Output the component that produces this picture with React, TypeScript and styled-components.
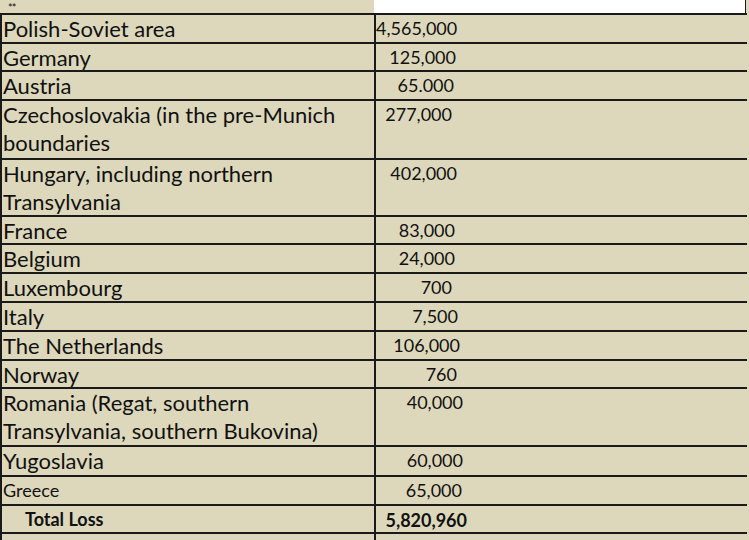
import React from "react";
import styled, { createGlobalStyle } from "styled-components";

const Global = createGlobalStyle`
  html, body { margin: 0; padding: 0; background: #ddd8bb; }
  body { font-family: Lato, "Liberation Sans", sans-serif; color: #111; }
`;

const BEIGE = "#ddd8bb";
const LINE = "#1a1a1a";

const Table = styled.div`
  width: 749px;
  background: ${BEIGE};
  overflow: hidden;
  height: 540px;
`;

const HeaderRow = styled.div`
  display: grid;
  grid-template-columns: 374px 372px 3px;
  height: 13px;
`;

const Stars = styled.div`
  font-size: 11px;
  line-height: 11px;
  padding-top: 2px;
  padding-left: 8px;
  letter-spacing: -1px;
`;

const WhiteCell = styled.div`
  background: #fff;
  border-right: 1px solid ${LINE};
`;

const Row = styled.div<{ $h: number }>`
  display: grid;
  grid-template-columns: 376px 1fr;
  height: ${(p) => p.$h}px;
  box-sizing: border-box;
  border-top: 2px solid ${LINE};
  margin-right: 2px;
`;

const Label = styled.div<{ $kind: "normal" | "small" | "total" }>`
  box-sizing: border-box;
  border-left: 2px solid ${LINE};
  border-right: 2px solid ${LINE};
  padding-left: ${(p) => (p.$kind === "total" ? 23 : 1)}px;
  padding-top: ${(p) => (p.$kind === "normal" ? 0 : 2)}px;
  font-size: ${(p) => (p.$kind === "normal" ? 22 : 18)}px;
  font-weight: ${(p) => (p.$kind === "total" ? 700 : 400)};
  line-height: ${(p) => (p.$kind === "normal" ? 28 : 22)}px;
  white-space: nowrap;
  overflow: hidden;
`;

const Value = styled.div<{ $end: number; $bold?: boolean }>`
  width: ${(p) => p.$end}px;
  text-align: right;
  font-size: 18px;
  font-weight: ${(p) => (p.$bold ? 700 : 400)};
  line-height: 24px;
  padding-top: ${(p) => (p.$bold ? 2 : 1)}px;
  white-space: nowrap;
`;

type Item = {
  label: React.ReactNode;
  value: string;
  h: number;
  end: number;
  kind?: "normal" | "small" | "total";
};

const rows: Item[] = [
  { label: "Polish-Soviet area", value: "4,565,000", h: 29, end: 457 },
  { label: "Germany", value: "125,000", h: 28, end: 456 },
  { label: "Austria", value: "65.000", h: 29, end: 454 },
  {
    label: (
      <>
        Czechoslovakia (in the pre-Munich
        <br />
        boundaries
      </>
    ),
    value: "277,000",
    h: 59,
    end: 452,
  },
  {
    label: (
      <>
        Hungary, including northern
        <br />
        Transylvania
      </>
    ),
    value: "402,000",
    h: 57,
    end: 457,
  },
  { label: "France", value: "83,000", h: 28, end: 455 },
  { label: "Belgium", value: "24,000", h: 29, end: 455 },
  { label: "Luxembourg", value: "700", h: 29, end: 452 },
  { label: "Italy", value: "7,500", h: 29, end: 458 },
  { label: "The Netherlands", value: "106,000", h: 29, end: 460 },
  { label: "Norway", value: "760", h: 28, end: 457 },
  {
    label: (
      <>
        Romania (Regat, southern
        <br />
        Transylvania, southern Bukovina)
      </>
    ),
    value: "40,000",
    h: 58,
    end: 463,
  },
  { label: "Yugoslavia", value: "60,000", h: 30, end: 463 },
  { label: "Greece", value: "65,000", h: 29, end: 462, kind: "small" },
  { label: "Total Loss", value: "5,820,960", h: 28, end: 467, kind: "total" },
  { label: "", value: "", h: 30, end: 460 },
];

export default function App() {
  return (
    <>
      <Global />
      <Table>
        <HeaderRow>
          <Stars>**</Stars>
          <WhiteCell />
          <div />
        </HeaderRow>
        {rows.map((r, i) => (
          <Row key={i} $h={r.h}>
            <Label $kind={r.kind ?? "normal"}>{r.label}</Label>
            <Value $end={r.end - 376} $bold={r.kind === "total"}>
              {r.value}
            </Value>
          </Row>
        ))}
      </Table>
    </>
  );
}
